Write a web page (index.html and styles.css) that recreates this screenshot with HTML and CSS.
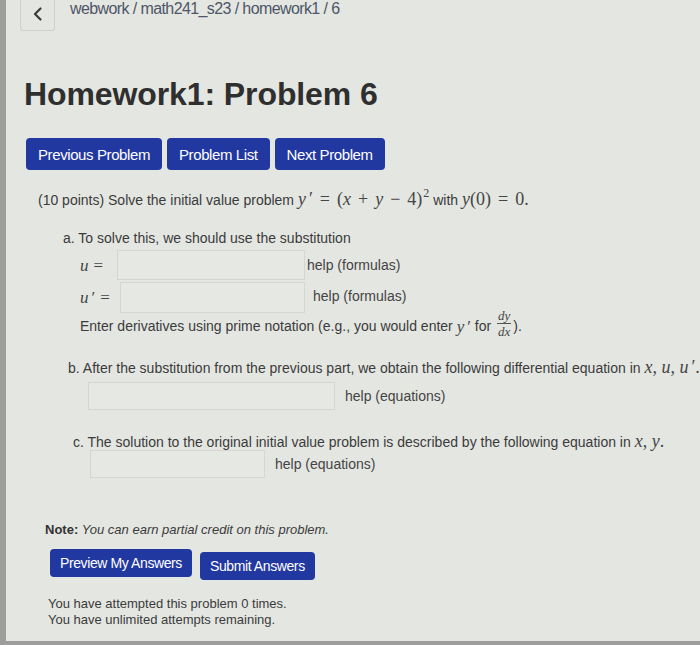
FILE: index.html
```html
<!DOCTYPE html>
<html>
<head>
<meta charset="utf-8">
<title>Homework1: Problem 6</title>
<link rel="stylesheet" href="styles.css">
</head>
<body>
<div class="screen">
  <header class="topbar">
    <div class="back">
      <svg width="12" height="16" viewBox="0 0 12 16"><path d="M8.5 2.5 L3 8 L8.5 13.5" fill="none" stroke="#3a3a3a" stroke-width="2.2" stroke-linecap="round" stroke-linejoin="round"/></svg>
    </div>
    <div class="crumbs">webwork / math241_s23 / homework1 / 6</div>
  </header>

  <main class="content">
    <h1 class="title">Homework1: Problem 6</h1>

    <nav class="nav">
      <button class="btn">Previous Problem</button>
      <button class="btn">Problem List</button>
      <button class="btn">Next Problem</button>
    </nav>

    <p class="intro">(10 points) Solve the initial value problem <span class="m"><i>y</i><span class="pr">′</span><span class="op">=</span>(<i>x</i><span class="op">+</span><i>y</i><span class="op">−</span>4)<sup>2</sup></span> with <span class="m"><i>y</i>(0)<span class="op">=</span>0.</span></p>

    <section class="part part-a">
      <div class="label-line">a. To solve this, we should use the substitution</div>
      <div class="row row-u">
        <span class="m lbl"><i>u</i><span class="op">=</span></span>
        <span class="field field-u"></span>
        <span class="help">help (formulas)</span>
      </div>
      <div class="row row-up">
        <span class="m lbl"><i>u</i><span class="pr">′</span><span class="op">=</span></span>
        <span class="field field-up"></span>
        <span class="help">help (formulas)</span>
      </div>
      <div class="row row-note">
        Enter derivatives using prime notation (e.g., you would enter&nbsp;<span class="m"><i>y</i><span class="pr">′</span></span>&nbsp;for&nbsp;<span class="frac"><span class="num"><i>dy</i></span><span class="den"><i>dx</i></span></span>).
      </div>
    </section>

    <section class="part part-b">
      <div class="label-line">b. After the substitution from the previous part, we obtain the following differential equation in <span class="m"><i>x</i>, <i>u</i>, <i>u</i><span class="pr">′</span>.</span></div>
      <div class="row row-b">
        <span class="field field-b"></span>
        <span class="help">help (equations)</span>
      </div>
    </section>

    <section class="part part-c">
      <div class="label-line">c. The solution to the original initial value problem is described by the following equation in <span class="m"><i>x</i>, <i>y</i>.</span></div>
      <div class="row row-c">
        <span class="field field-c"></span>
        <span class="help">help (equations)</span>
      </div>
    </section>

    <p class="note"><b>Note:</b> <i>You can earn partial credit on this problem.</i></p>

    <div class="actions">
      <button class="btn btn-sm">Preview My Answers</button>
      <button class="btn btn-sm btn-submit">Submit Answers</button>
    </div>

    <p class="attempts">You have attempted this problem 0 times.<br>You have unlimited attempts remaining.</p>
  </main>
</div>
</body>
</html>
```

FILE: styles.css
```css
* { box-sizing: border-box; }
html, body { margin: 0; padding: 0; }
body {
  width: 700px;
  height: 645px;
  overflow: hidden;
  background: #9d9e9c;
  font-family: "Liberation Sans", Arial, sans-serif;
  color: #3b3b3b;
}
.screen {
  margin-left: 6px;
  height: 641px;
  background: #e4e6e2;
  overflow: hidden;
}

/* top bar */
.topbar {
  height: 32px;
  display: flex;
  align-items: flex-start;
}
.back {
  margin-left: 14px;
  width: 35px;
  height: 31px;
  border: 1px solid #cdd0cc;
  border-top: none;
  border-radius: 0 0 3px 3px;
  display: flex;
  align-items: center;
  justify-content: center;
  padding-bottom: 3px;
}
.crumbs {
  margin-left: 15px;
  margin-top: -1px;
  font-size: 16px;
  line-height: 20px;
  letter-spacing: -0.6px;
  color: #4e5667;
  white-space: nowrap;
}

/* content */
.content {
  padding-left: 18px;
  font-size: 14px;
  line-height: 20px;
}
.title {
  margin: 42px 0 0;
  font-size: 32px;
  line-height: 40px;
  font-weight: bold;
  color: #2f2f2f;
  letter-spacing: -0.1px;
}
.nav {
  margin: 24px 0 0 2px;
  display: flex;
  gap: 5px;
}
.btn {
  height: 32px;
  padding: 0 12px;
  background: #2138a1;
  color: #fff;
  border: none;
  border-radius: 4px;
  font-family: "Liberation Sans", Arial, sans-serif;
  font-size: 15px;
  letter-spacing: -0.4px;
}

.intro {
  margin: 20px 0 0 14px;
  white-space: nowrap;
}

/* math */
.m {
  font-family: "Liberation Serif", "Times New Roman", serif;
  font-size: 18px;
  line-height: 1;
  color: #454545;
}
.m i { font-style: italic; }
.m sup { font-size: 12px; line-height: 0; vertical-align: 8px; margin-left: 1px; }
.pr { margin-left: 3px; }
.op { margin: 0 7px; }

.label-line {
  white-space: nowrap;
  height: 20px;
}
.part-a { margin: 18px 0 0 39px; }
.part-a .row { margin-left: 17px; }
.row {
  display: flex;
  align-items: center;
  margin-top: 2px;
  white-space: nowrap;
}
.row-u { height: 30px; }
.row-up { height: 31px; }
.lbl { width: 37px; font-size: 17px; }
.lbl .op { margin: 0 5px; }
.row-up .lbl { width: 40px; }
.field {
  display: block;
  height: 100%;
  border: 1px solid #d3d6d2;
  background: #e6e8e4;
}
.field-u { width: 188px; }
.field-up { width: 185px; }
.row-u .help { margin-left: 2px; }
.row-up .help { margin-left: 8px; margin-top: -3px; }
.help { color: #444; }

.row-note {
  height: 24px;
  margin-top: 1px;
}
.row-note .m { font-size: 17px; }
.frac {
  display: inline-flex;
  flex-direction: column;
  align-items: center;
  font-family: "Liberation Serif", "Times New Roman", serif;
  font-size: 13px;
  line-height: 13px;
  color: #444;
  margin: -5px 2px 0;
}
.frac .num { border-bottom: 1px solid #555; padding: 0 1px 1px; }
.frac .den { padding-top: 1px; }

.part-b { margin: 20px 0 0 44px; }
.row-b { height: 28px; margin: 4px 0 0 20px; }
.field-b { width: 247px; }
.row-b .help { margin-left: 10px; }

.part-c { margin: 22px 0 0 49px; }
.part-c .label-line { line-height: 18px; height: 18px; }
.row-c { height: 28px; margin: 0 0 0 17px; }
.field-c { width: 175px; }
.row-c .help { margin-left: 10px; }

.note {
  margin: 42px 0 0 21px;
  font-size: 13px;
  height: 20px;
}
.note b { font-weight: bold; color: #333; }

.actions {
  margin: 9px 0 0 26px;
  display: flex;
  gap: 8px;
  align-items: flex-start;
}
.btn-sm { height: 28px; padding: 0 10px; font-size: 14px; letter-spacing: -0.4px; }
.btn-submit { margin-top: 3px; }

.attempts {
  margin: 16px 0 0 24px;
  font-size: 13px;
  line-height: 16px;
}
```
